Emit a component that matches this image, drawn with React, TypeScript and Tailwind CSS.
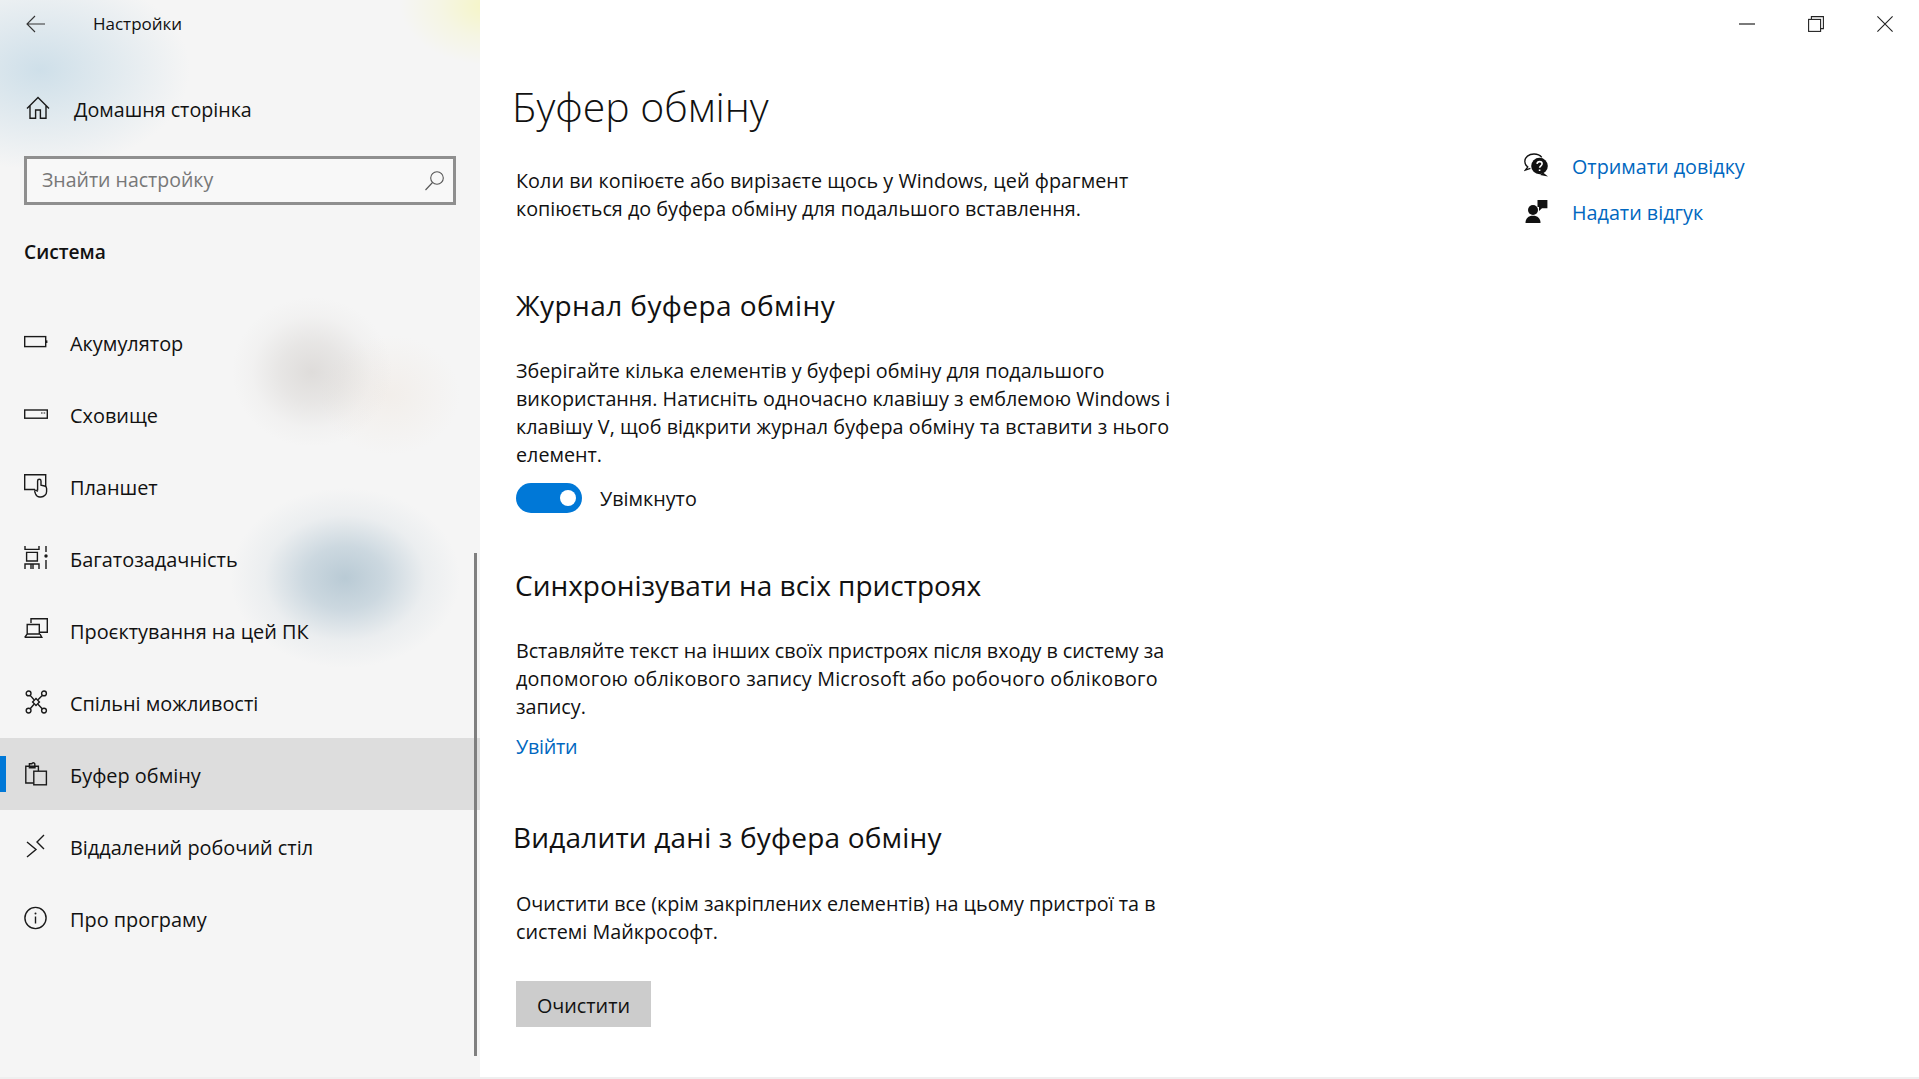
import React from 'react';

const font = "font-['Open_Sans','Noto_Sans',sans-serif]";

const Icon = ({ children }: { children: React.ReactNode }) => (
  <svg viewBox="0 0 24 24" fill="none" stroke="#1a1a1a" strokeWidth="1.4" className="w-6 h-6 shrink-0">
    {children}
  </svg>
);

const navItems: { label: string; active?: boolean; icon: React.ReactNode }[] = [
  {
    label: 'Акумулятор',
    icon: (
      <>
        <rect x="0.7" y="6.6" width="21" height="10" />
        <rect x="22" y="10.4" width="1.4" height="2.6" fill="#1a1a1a" stroke="none" />
      </>
    ),
  },
  {
    label: 'Сховище',
    icon: (
      <>
        <rect x="0.7" y="8" width="22.6" height="8.2" />
        <path d="M17 11h1.6M19.6 11h1.6" strokeWidth="1.2" />
      </>
    ),
  },
  {
    label: 'Планшет',
    icon: (
      <>
        <path d="M11 15.5H0.7V0.7H21.7V12" />
        <path d="M13.6 16.5V7a1.7 1.7 0 0 1 3.4 0V11.2l3.6.8c1.2.3 2 1.2 2 2.4v3a5.6 5.6 0 0 1-5.6 5.6h-1.2c-2.2 0-3.4-1-4.2-3l-.8-2.2c-.4-1.4 1-2.2 2-1.2l.8 1" />
      </>
    ),
  },
  {
    label: 'Багатозадачність',
    icon: (
      <>
        <path d="M1 0v3.4H15V0M2.6 6.4H13.4V15H2.6ZM1 23V18H15V23M1 18H15M7 18V23M9 18V23M22 0V6M22 14V23" />
        <circle cx="22" cy="10" r="1.7" fill="#1a1a1a" stroke="none" />
      </>
    ),
  },
  {
    label: 'Проєктування на цей ПК',
    icon: (
      <>
        <path d="M7 5V0.7H23.3V14.2H16" />
        <path d="M3.2 6.5H15.3V16H3.2ZM0.7 19.3H17.8L16 16M0.7 19.3L3.2 16" />
      </>
    ),
  },
  {
    label: 'Спільні можливості',
    icon: (
      <>
        <rect x="9.6" y="9.6" width="4.8" height="4.8" transform="rotate(45 12 12)" />
        <circle cx="4.6" cy="3.4" r="2.4" />
        <circle cx="20" cy="3.4" r="2.4" />
        <circle cx="4.6" cy="20.6" r="2.4" />
        <circle cx="20" cy="20.6" r="2.4" />
        <path d="M6.2 5.4L10 9.8M18.2 5.4L14 9.8M6.2 18.8L10 14.2M18.2 18.8L14 14.2" />
      </>
    ),
  },
  {
    label: 'Буфер обміну',
    active: true,
    icon: (
      <>
        <path d="M9.5 21H1.8V4.2H14.4V9" />
        <path d="M5.4 4.2V1.8h2.4a1.6 1.6 0 0 1 3 0h0v2.4M5.4 4.2v1.6h5.6V4.2" />
        <rect x="9.8" y="9.2" width="12.6" height="13.6" />
      </>
    ),
  },
  {
    label: 'Віддалений робочий стіл',
    icon: (
      <>
        <path d="M3 8L12 15.5L3 23" />
        <path d="M20 1L13 8L20 15" />
      </>
    ),
  },
  {
    label: 'Про програму',
    icon: (
      <>
        <circle cx="11.5" cy="12" r="10.6" />
        <path d="M11.5 10.5V17.5" />
        <circle cx="11.5" cy="7.4" r="1" fill="#1a1a1a" stroke="none" />
      </>
    ),
  },
];

function Sidebar() {
  return (
    <aside className="relative w-[480px] h-full shrink-0 overflow-hidden bg-[#f5f5f5] bg-[radial-gradient(ellipse_150px_100px_at_40px_70px,rgba(190,214,228,0.7),rgba(190,214,228,0.35)_50%,transparent),radial-gradient(ellipse_90px_60px_at_490px_5px,rgba(245,245,175,0.7),rgba(245,245,175,0.25)_55%,transparent),radial-gradient(ellipse_80px_75px_at_312px_372px,rgba(195,190,186,0.45),rgba(195,190,186,0.28)_40%,rgba(195,190,186,0.07)_75%,transparent),radial-gradient(ellipse_70px_60px_at_390px_395px,rgba(235,222,210,0.3),transparent),radial-gradient(ellipse_115px_90px_at_345px_578px,rgba(165,188,202,0.75),rgba(170,192,206,0.55)_35%,rgba(190,205,215,0.18)_70%,transparent)]">
      <div className="h-12 flex items-center">
        <svg viewBox="0 0 20 20" fill="none" stroke="#333" strokeWidth="1.1" className="ml-[26px] w-5 h-5">
          <path d="M1 10H19M9 2L1 10L9 18" />
        </svg>
        <span className="ml-[47px] text-[17px] text-[#111]">Настройки</span>
      </div>
      <div className="h-[72px] mt-[26px] flex items-center">
        <svg viewBox="0 0 24 24" fill="none" stroke="#1a1a1a" strokeWidth="1.4" className="w-6 h-6 ml-[26px] mb-1">
          <path d="M1 12.5L12 1.6L23 12.5M4 10V22.3H9.6V14H14.4V22.3H20V10" />
        </svg>
        <span className="ml-[24px] text-[19.7px] text-[#111]">Домашня сторінка</span>
      </div>
      <div className="mx-[24px] mt-[10px] h-[49px] border-[3px] border-[#8f8f8f] bg-[#f8f8f8] flex items-center justify-between pl-[15px] pr-[8px]">
        <span className="text-[19.5px] text-[#777] mb-[2px]">Знайти настройку</span>
        <svg viewBox="0 0 22 22" fill="none" stroke="#555" strokeWidth="1.1" className="w-[22px] h-[22px]">
          <circle cx="14" cy="8" r="6.3" />
          <path d="M9.5 12.5L2.5 20" />
        </svg>
      </div>
      <div className="ml-[24px] mt-[33px] text-[19.2px] font-semibold text-[#111] leading-[28px]">Система</div>
      <nav className="mt-[40px]">
        {navItems.map((item) => (
          <div
            key={item.label}
            className={item.active ? 'relative h-[72px] flex items-center bg-[#dddddd]' : 'h-[72px] flex items-center'}
          >
            {item.active && <div className="absolute left-0 top-[18px] w-[6px] h-[36px] bg-[#0078d7]" />}
            <div className="ml-[24px]">
              <Icon>{item.icon}</Icon>
            </div>
            <span className="ml-[22px] pt-1 text-[19.9px] text-[#111]">{item.label}</span>
          </div>
        ))}
      </nav>
      <div className="absolute right-[3px] top-[553px] w-[3px] h-[503px] bg-[#7f7f7f]" />
    </aside>
  );
}

function Para({ children }: { children: React.ReactNode }) {
  return <p className="ml-[36px] text-[19.75px] leading-[28px] text-[#111] whitespace-nowrap">{children}</p>;
}

function Heading({ children, className }: { children: React.ReactNode; className: string }) {
  return <h2 className={`text-[28px] leading-[40px] text-[#111] whitespace-nowrap ${className}`}>{children}</h2>;
}

export default function App() {
  return (
    <div className={`flex w-full h-screen overflow-hidden bg-white border-b-2 border-[#efefef] ${font}`}>
      <Sidebar />
      <main className="flex-1 min-w-0 flex flex-col">
        <div className="h-12 flex items-center justify-end">
          <svg viewBox="0 0 16 16" fill="none" stroke="#222" strokeWidth="1.2" className="w-4 h-4 mr-[53px]">
            <path d="M0 8H16" />
          </svg>
          <svg viewBox="0 0 16 16" fill="none" stroke="#222" strokeWidth="1.1" className="w-4 h-4 mr-[53px]">
            <rect x="0.6" y="3.4" width="12" height="12" />
            <path d="M3.4 3.4V0.6H15.4V12.6H12.6" />
          </svg>
          <svg viewBox="0 0 16 16" fill="none" stroke="#222" strokeWidth="1.1" className="w-4 h-4 mr-[26px]">
            <path d="M0.4 0.4L15.6 15.6M15.6 0.4L0.4 15.6" />
          </svg>
        </div>
        <div className="flex">
          <div className="w-[1044px]">
            <h1 className="ml-[32px] mt-[28px] text-[41px] leading-[60px] font-light text-[#111]">Буфер обміну</h1>
            <div className="mt-[31px]">
              <Para>
                <span className="tracking-[0.06px]">Коли ви копіюєте або вирізаєте щось у Windows, цей фрагмент</span>
                <br />
                копіюється до буфера обміну для подальшого вставлення.
              </Para>
            </div>
            <div className="mt-[62px]">
              <Heading className="ml-[36px] tracking-[0.43px]">Журнал буфера обміну</Heading>
            </div>
            <div className="mt-[32px]">
              <Para>
                Зберігайте кілька елементів у буфері обміну для подальшого
                <br />
                використання. Натисніть одночасно клавішу з емблемою Windows і
                <br />
                <span className="tracking-[0.05px]">клавішу V, щоб відкрити журнал буфера обміну та вставити з нього</span>
                <br />
                елемент.
              </Para>
            </div>
            <div className="ml-[36px] mt-[14px] h-[30px] flex items-center">
              <div className="relative w-[66px] h-[30px] rounded-full bg-[#0078d7]">
                <div className="absolute right-[6px] top-[7px] w-4 h-4 rounded-full bg-white" />
              </div>
              <span className="ml-[18px] pt-[2px] text-[19.75px] text-[#111]">Увімкнуто</span>
            </div>
            <div className="mt-[52px]">
              <Heading className="ml-[35px]">Синхронізувати на всіх пристроях</Heading>
            </div>
            <div className="mt-[32px]">
              <Para>
                <span className="tracking-[-0.055px]">Вставляйте текст на інших своїх пристроях після входу в систему за</span>
                <br />
                <span className="tracking-[0.18px]">допомогою облікового запису Microsoft або робочого облікового</span>
                <br />
                запису.
              </Para>
            </div>
            <div className="ml-[36px] mt-[12px] text-[19.75px] leading-[28px] tracking-[-0.3px] text-[#0067c0]">Увійти</div>
            <div className="mt-[56px]">
              <Heading className="ml-[33px] tracking-[0.18px]">Видалити дані з буфера обміну</Heading>
            </div>
            <div className="mt-[33px]">
              <Para>
                Очистити все (крім закріплених елементів) на цьому пристрої та в
                <br />
                системі Майкрософт.
              </Para>
            </div>
            <button className="ml-[36px] mt-[35px] w-[135px] h-[46px] pt-[3px] bg-[#cccccc] text-[19.75px] text-[#111]">
              Очистити
            </button>
          </div>
          <div className="mt-[96px]">
            <div className="h-[46px] flex items-center">
              <svg viewBox="0 0 24 24" className="w-6 h-6 mb-1" fill="#111">
                <path d="M10 1C4.8 1 .8 4.2.8 8.4c0 2.4 1.2 4.3 3 5.6L1.4 17l5-1.6" fill="none" stroke="#111" strokeWidth="1.3" />
                <path d="M10 1c3.4 0 6.2 1.3 7.8 3.4" fill="none" stroke="#111" strokeWidth="1.3" />
                <circle cx="15.5" cy="13" r="8.3" />
                <path d="M19 19.5l5 4-8-1.6z" />
                <path d="M13 10.8c.2-1.5 1.3-2.2 2.6-2.2 1.4 0 2.5.9 2.5 2.2 0 2-2.4 2-2.5 4M15.6 16.4v1.6" fill="none" stroke="#fff" strokeWidth="1.6" />
              </svg>
              <span className="ml-[24px] text-[19.75px] text-[#0067c0]">Отримати довідку</span>
            </div>
            <div className="h-[46px] flex items-center">
              <svg viewBox="0 0 24 24" className="w-6 h-6 mb-1" fill="#111">
                <circle cx="9" cy="11" r="5" />
                <path d="M1.5 24c0-4.6 2.8-7.2 7.5-7.2s7.5 2.6 7.5 7.2z" />
                <path d="M13.5 1H23.4V9.2H18L15 12V8H13.5z" />
              </svg>
              <span className="ml-[24px] text-[19.75px] text-[#0067c0]">Надати відгук</span>
            </div>
          </div>
        </div>
      </main>
    </div>
  );
}
